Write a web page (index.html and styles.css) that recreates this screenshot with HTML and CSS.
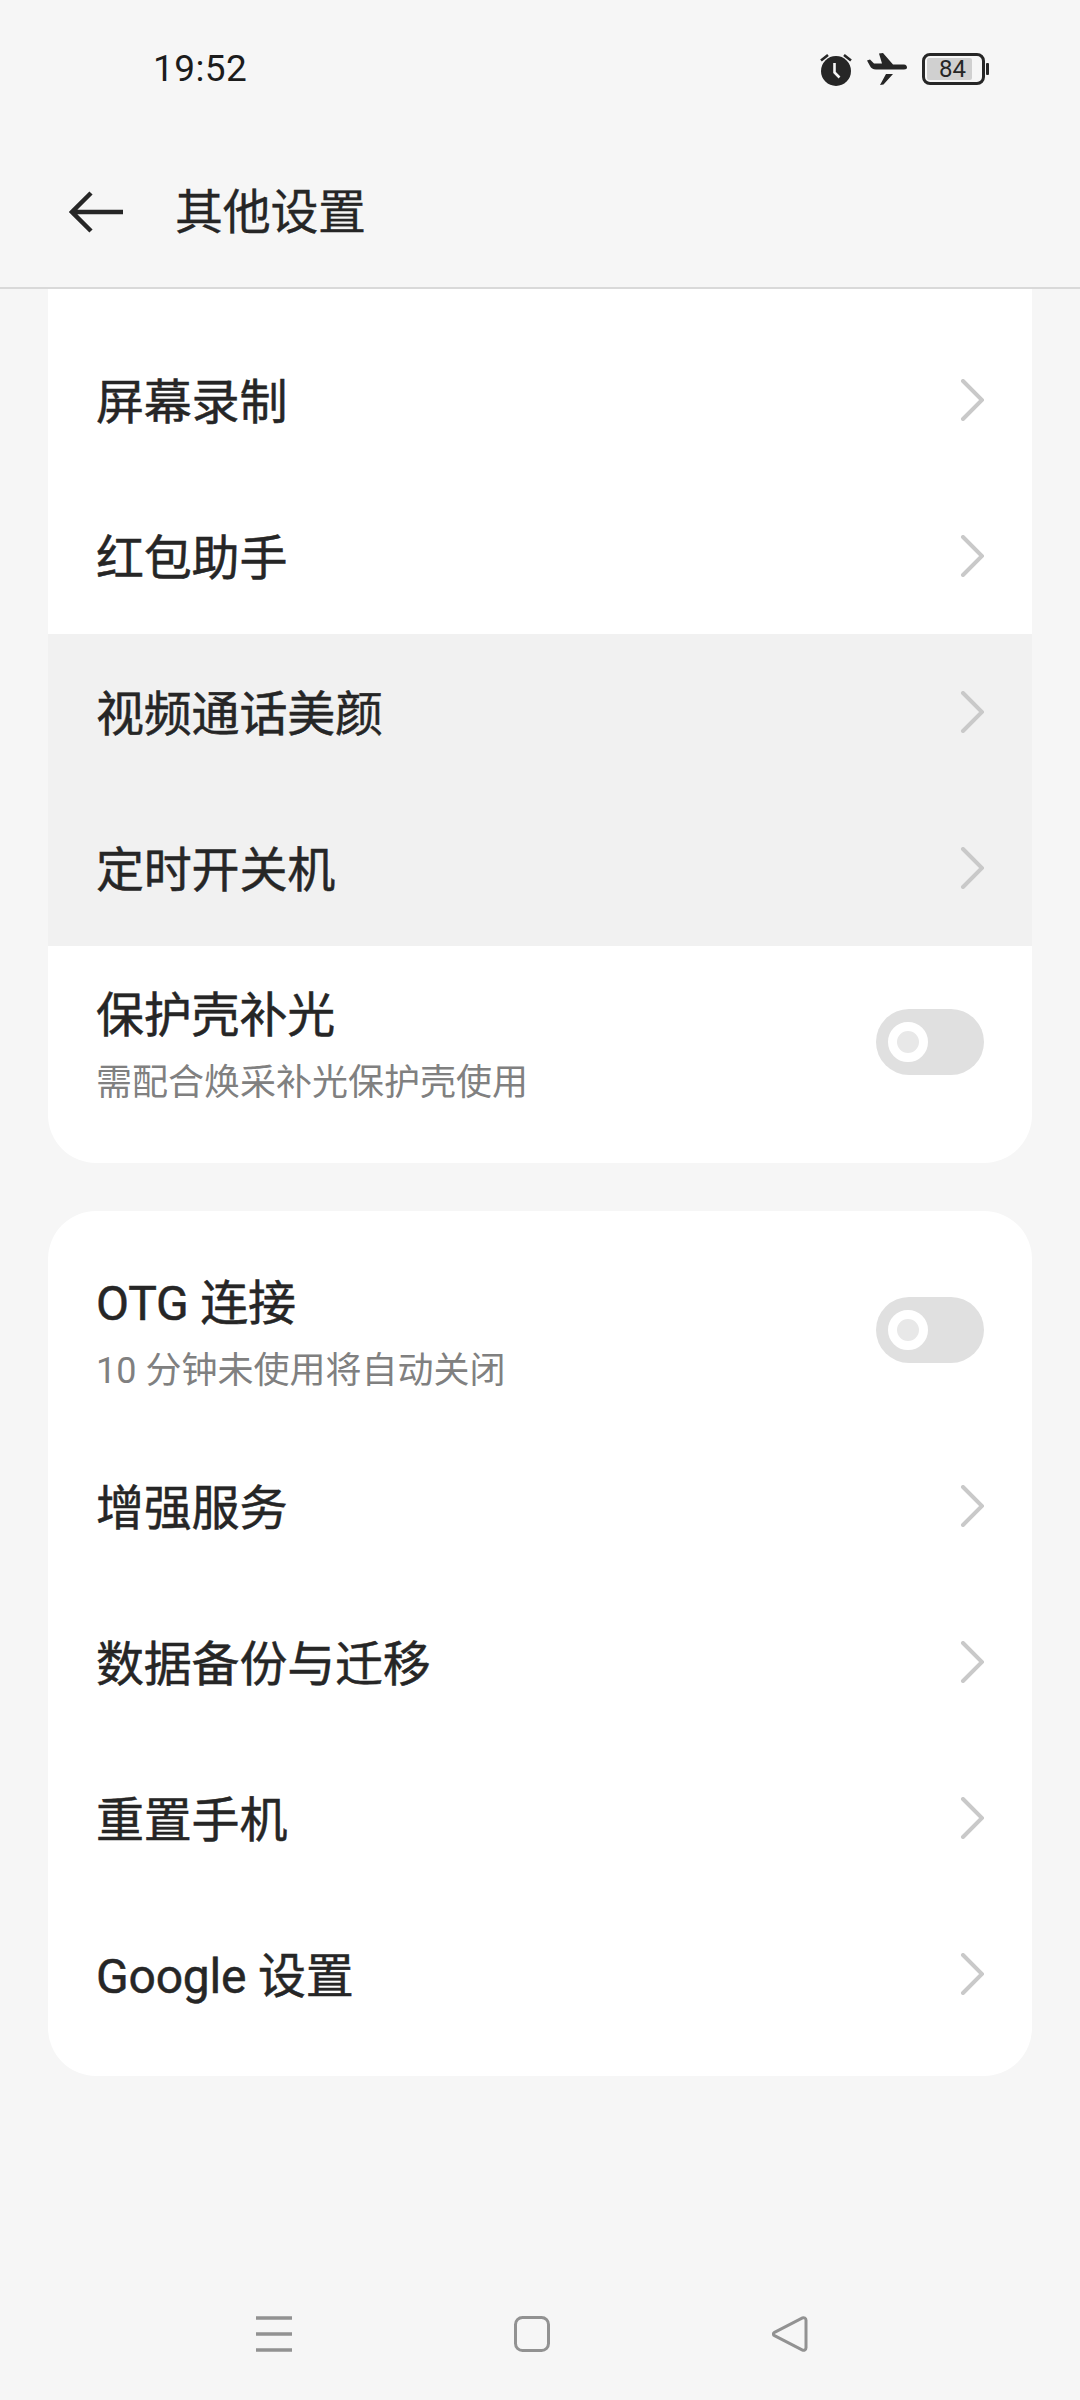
FILE: index.html
```html
<!DOCTYPE html>
<html lang="zh-CN">
<head>
<meta charset="utf-8">
<title>其他设置</title>
<link rel="stylesheet" href="styles.css">
</head>
<body>
<div class="screen">
  <header class="status">
    <span class="time">19:52</span>
    <div class="status-icons">
      <svg class="ic-alarm" viewBox="0 0 32 34" width="32" height="34"><path d="M1 8.5 8 3M31 8.5 24 3" stroke="#262626" stroke-width="2.6" fill="none"/><circle cx="16" cy="19" r="15" fill="#262626"/><path d="M14.5 11v9.5l5 5" stroke="#f6f6f6" stroke-width="2.6" fill="none"/></svg>
      <svg class="ic-plane" viewBox="0 0 40 32" width="40" height="32"><path d="M0 7.5 3 6.5 7 10.5H15L12 0.5 16 0 26 11.5H37C39 11.5 40 13 40 14.500 40 15.500 39 16.500 37 16.500H9C6 16.500 4 15 3 13ZM13 32 19 21H26L16.500 31.500Z" fill="#262626"/></svg>
      <div class="battery">
        <div class="battery-body"><span class="battery-fill">84</span></div>
        <i class="battery-tip"></i>
      </div>
    </div>
  </header>
  <div class="titlebar">
    <svg class="back" viewBox="0 0 54 42" width="54" height="42"><path d="M22 2 3 21l19 19M3 21h51" fill="none" stroke="#262626" stroke-width="4.500"/></svg>
    <h1 class="title">其他设置</h1>
  </div>
  <main class="content">
    <section class="card card-scrolled">
      <div class="row"><span class="row-label">屏幕录制</span><svg class="chev" viewBox="0 0 24 42" width="24" height="42"><path d="M3 2l19 19L3 40" fill="none" stroke="#c9c9c9" stroke-width="4" stroke-linecap="round"/></svg></div>
      <div class="row"><span class="row-label">红包助手</span><svg class="chev" viewBox="0 0 24 42" width="24" height="42"><path d="M3 2l19 19L3 40" fill="none" stroke="#c9c9c9" stroke-width="4" stroke-linecap="round"/></svg></div>
      <div class="row row-pressed"><span class="row-label">视频通话美颜</span><svg class="chev" viewBox="0 0 24 42" width="24" height="42"><path d="M3 2l19 19L3 40" fill="none" stroke="#c9c9c9" stroke-width="4" stroke-linecap="round"/></svg></div>
      <div class="row row-pressed"><span class="row-label">定时开关机</span><svg class="chev" viewBox="0 0 24 42" width="24" height="42"><path d="M3 2l19 19L3 40" fill="none" stroke="#c9c9c9" stroke-width="4" stroke-linecap="round"/></svg></div>
      <div class="row row-tall">
        <div class="row-text"><span class="row-label">保护壳补光</span><span class="row-sub">需配合焕采补光保护壳使用</span></div>
        <div class="toggle"><i class="knob"></i></div>
      </div>
    </section>
    <section class="card">
      <div class="row row-tall">
        <div class="row-text"><span class="row-label">OTG 连接</span><span class="row-sub">10 分钟未使用将自动关闭</span></div>
        <div class="toggle"><i class="knob"></i></div>
      </div>
      <div class="row"><span class="row-label">增强服务</span><svg class="chev" viewBox="0 0 24 42" width="24" height="42"><path d="M3 2l19 19L3 40" fill="none" stroke="#c9c9c9" stroke-width="4" stroke-linecap="round"/></svg></div>
      <div class="row"><span class="row-label">数据备份与迁移</span><svg class="chev" viewBox="0 0 24 42" width="24" height="42"><path d="M3 2l19 19L3 40" fill="none" stroke="#c9c9c9" stroke-width="4" stroke-linecap="round"/></svg></div>
      <div class="row"><span class="row-label">重置手机</span><svg class="chev" viewBox="0 0 24 42" width="24" height="42"><path d="M3 2l19 19L3 40" fill="none" stroke="#c9c9c9" stroke-width="4" stroke-linecap="round"/></svg></div>
      <div class="row"><span class="row-label">Google 设置</span><svg class="chev" viewBox="0 0 24 42" width="24" height="42"><path d="M3 2l19 19L3 40" fill="none" stroke="#c9c9c9" stroke-width="4" stroke-linecap="round"/></svg></div>
    </section>
  </main>
  <nav class="navbar">
    <svg viewBox="0 0 36 36" width="36" height="36"><path d="M0 2h36M0 18h36M0 34h36" stroke="#929292" stroke-width="3.400" fill="none"/></svg>
    <svg viewBox="0 0 36 36" width="36" height="36"><rect x="1.500" y="1.500" width="33" height="33" rx="7" fill="none" stroke="#929292" stroke-width="3"/></svg>
    <svg viewBox="0 0 36 36" width="36" height="36"><path d="M2.500 16.300 30.500 1.900C32 1.300 34 2.200 34 4.200V31.800C34 33.800 32 34.700 30.500 34.100L2.500 19.700C1 18.900 1 17.100 2.500 16.300Z" fill="none" stroke="#929292" stroke-width="3"/></svg>
  </nav>
</div>
</body>
</html>
```

FILE: styles.css
```css
* { box-sizing: border-box; }
html, body { margin: 0; padding: 0; }
body {
  background: #f6f6f6;
  color: #262626;
  font-family: Roboto, "Noto Sans CJK SC", sans-serif;
}
.screen {
  width: 1080px;
  height: 2400px;
  display: flex;
  flex-direction: column;
  overflow: hidden;
}
.status {
  height: 136px;
  flex: none;
  display: flex;
  justify-content: space-between;
  align-items: flex-start;
  padding: 47px 91px 0 153px;
}
.time { font-size: 37px; line-height: 44px; letter-spacing: 0.4px; color: #1c1c1c; }
.status-icons { display: flex; align-items: center; gap: 15px; padding-top: 5px; }
.battery { display: flex; align-items: center; gap: 1px; }
.battery-body {
  width: 63px;
  height: 32px;
  border: 3px solid #262626;
  border-radius: 8px;
  padding: 2px;
}
.battery-fill {
  display: block;
  width: 45px;
  height: 22px;
  background: #d0d0d0;
  border-radius: 2px;
  font-size: 24px;
  line-height: 22px;
  text-align: center;
  white-space: nowrap;
  text-indent: 6px;
}
.battery-tip { width: 3px; height: 12px; background: #262626; border-radius: 1px; }
.titlebar {
  height: 153px;
  flex: none;
  display: flex;
  align-items: center;
  padding: 0 0 0 69px;
  border-bottom: 2px solid #d9d9d9;
  gap: 52px;
}
.title {
  margin: 0;
  padding-top: 3px;
  font-size: 48px;
  font-weight: 400;
  line-height: 56px;
  letter-spacing: -0.3px;
  -webkit-text-stroke: 0.3px #262626;
}
.content {
  flex: 1;
  padding: 0 48px;
  display: flex;
  flex-direction: column;
  gap: 48px;
}
.card {
  background: #fff;
  border-radius: 48px;
  padding: 21px 0 24px;
  overflow: hidden;
}
.card-scrolled { border-radius: 0 0 48px 48px; padding: 33px 0 25px; }
.row {
  height: 156px;
  display: flex;
  align-items: center;
  justify-content: space-between;
  padding: 0 48px;
}
.row-pressed { background: #f1f1f1; }
.row-tall { height: 196px; }
.card-scrolled .row-tall { height: 192px; }
.row-text { display: flex; flex-direction: column; gap: 18px; padding-top: 7px; }
.row > .row-label { padding-top: 6px; }
.row-label {
  font-size: 48px;
  line-height: 56px;
  font-weight: 400;
  letter-spacing: -0.2px;
  color: #262626;
  -webkit-text-stroke: 0.5px #262626;
}
.row-sub { font-size: 36px; line-height: 42px; color: #808080; }
.chev { display: block; flex: none; }
.toggle {
  width: 108px;
  height: 66px;
  border-radius: 33px;
  background: #e0e0e0;
  flex: none;
  display: flex;
  align-items: center;
  padding-left: 12px;
}
.knob {
  width: 40px;
  height: 40px;
  border-radius: 50%;
  background: #e8e8e8;
  border: 9px solid #fff;
}
.navbar {
  height: 126px;
  flex: none;
  display: flex;
  justify-content: space-between;
  padding: 42px 272px 0 256px;
  align-items: flex-start;
}
```
